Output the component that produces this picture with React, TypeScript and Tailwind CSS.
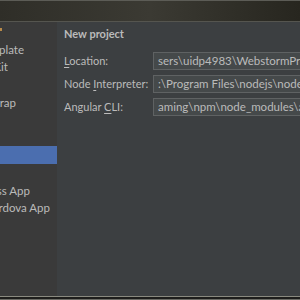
import React from "react"

const font = { fontFamily: "Lato, 'Noto Sans', sans-serif" }

// sidebar rows: visible tail of each template name, clipped at the left edge
const templates = [
  { name: "Empty Project", end: 0 },
  { name: "HTML5 Boilerplate", end: 24 },
  { name: "Web Starter Kit", end: 8 },
  { name: "React Starter Kit", end: 0 },
  { name: "Twitter Bootstrap", end: 16 },
  { name: "Foundation", end: 0 },
  { name: "AngularJS", end: 0 },
  { name: "Angular CLI", end: 0, selected: true },
  { name: "React App", end: 0 },
  { name: "Node.js Express App", end: 30 },
  { name: "PhoneGap/Cordova App", end: 50 },
  { name: "Meteor App", end: 0 },
  { name: "React Native", end: 0 },
]

function Field({ label, mnemonic, rest, value }: { label: string; mnemonic: string; rest: string; value: string }) {
  return (
    <div className="flex items-center h-[18px]">
      <div className="w-[89px] shrink-0 text-[11px] text-[#bbbbbb] whitespace-nowrap">
        {label}
        <span className="underline underline-offset-2">{mnemonic}</span>
        {rest}
      </div>
      <div className="w-[220px] shrink-0 h-[18px] border border-[#5f6263] bg-[#45494a] flex items-center pl-[4px] overflow-hidden">
        <span className="text-[11.5px] text-[#bbbbbb] whitespace-nowrap">{value}</span>
      </div>
    </div>
  )
}

export default function App() {
  return (
    <div className="w-[300px] h-[300px] flex flex-col overflow-hidden bg-[#3c3f41]" style={font}>
      {/* window title bar */}
      <div className="h-[21px] shrink-0 border-t border-[#5c5c56] bg-gradient-to-r from-[#2f2e28] via-[#3b3a33] to-[#27261f]" />
      <div className="h-[1px] shrink-0 bg-[#55554f]" />

      <div className="flex flex-1 min-h-0">
        {/* template list */}
        <div className="w-[57px] shrink-0 bg-[#3a3a3a] pt-[1px] overflow-hidden">
          {templates.map((t) => (
            <div
              key={t.name}
              className={`h-[17.6px] flex items-center ${t.selected ? "bg-[#4b6eaf]" : ""}`}
            >
              {t.end > 0 ? (
                <div
                  className="flex justify-end overflow-hidden whitespace-nowrap text-[11.5px] text-[#bbbbbb]"
                  style={{ width: t.end }}
                >
                  <span className="shrink-0">{t.name}</span>
                </div>
              ) : t.name === "Empty Project" ? (
                <span className="w-[2px] h-[3px] mb-[4px] bg-[#b88a4a]" />
              ) : null}
            </div>
          ))}
        </div>

        {/* settings */}
        <div className="flex-1 min-w-0 overflow-hidden pl-[7px] pt-[4px]">
          <div className="h-[16px] flex items-center text-[11px] font-bold text-[#bbbbbb]">New project</div>
          <div className="mt-[10px] flex flex-col gap-[5px]">
            <Field label="" mnemonic="L" rest="ocation:" value="sers\uidp4983\WebstormProjects\untitled" />
            <Field label="Node " mnemonic="I" rest="nterpreter:" value=":\Program Files\nodejs\node.exe" />
            <Field label="Angular " mnemonic="C" rest="LI:" value="aming\npm\node_modules\angular-cli" />
          </div>
        </div>
      </div>

      {/* window bottom frame */}
      <div className="h-[1px] shrink-0 bg-[#8a8a80]" />
      <div className="h-[2px] shrink-0 bg-[#1e1e1c]" />
      <div className="h-[1px] shrink-0 bg-[#6d6d67]" />
    </div>
  )
}
